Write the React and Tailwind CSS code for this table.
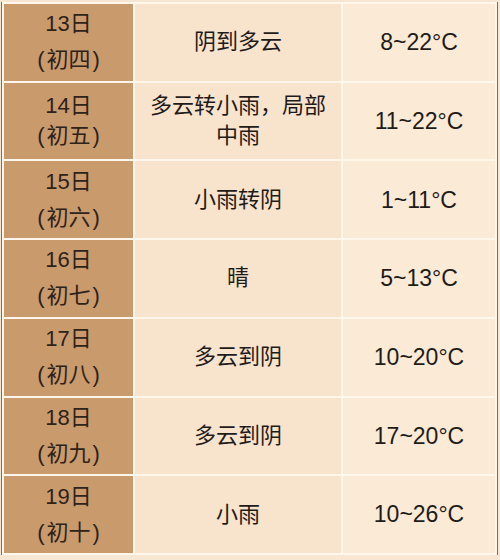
const rows = [
  { day: "13日", lunar: "初四", weather: ["阴到多云"], temp: "8~22°C" },
  { day: "14日", lunar: "初五", weather: ["多云转小雨，局部", "中雨"], temp: "11~22°C", tight: true },
  { day: "15日", lunar: "初六", weather: ["小雨转阴"], temp: "1~11°C" },
  { day: "16日", lunar: "初七", weather: ["晴"], temp: "5~13°C" },
  { day: "17日", lunar: "初八", weather: ["多云到阴"], temp: "10~20°C" },
  { day: "18日", lunar: "初九", weather: ["多云到阴"], temp: "17~20°C" },
  { day: "19日", lunar: "初十", weather: ["小雨"], temp: "10~26°C" },
];

export default function App() {
  return (
    <div
      className="w-[500px] h-[560px] overflow-hidden bg-[#f7e6d2] pl-[1px] flex flex-col"
      style={{ fontFamily: '"Liberation Sans", "Noto Sans CJK SC", sans-serif' }}
    >
      <div className="mt-[2px] w-[497px] border-x border-[#a85a4c]">
        {/* weather table */}
        <div className="grid grid-cols-[129px_206px_152px] grid-rows-[repeat(7,minmax(0,1fr))] gap-[2px] p-[2px] h-[553px] bg-[#fff7ec]">
          {rows.map((r) => (
            <Row key={r.day} {...r} />
          ))}
        </div>
      </div>
    </div>
  );
}

function Row({ day, lunar, weather, temp, tight }) {
  const lead = tight ? "leading-[30px]" : "leading-[36px]";
  return (
    <>
      <div className={`bg-[#c99a6c] text-[#2e2219] text-[22px] flex flex-col items-center justify-center ${lead}`}>
        <span>{day}</span>
        <span className="flex items-center gap-[2px]">
          <span className="font-light">(</span>
          <span>{lunar}</span>
          <span className="font-light">)</span>
        </span>
      </div>
      <div className={`bg-[#f8e3cd] text-[#1f1b18] text-[22px] flex flex-col items-center justify-center text-center ${lead}`}>
        {weather.map((w) => (
          <span key={w}>{w}</span>
        ))}
      </div>
      <div className="bg-[#faead6] text-[#1f1b18] text-[23px] flex items-center justify-center">
        {temp}
      </div>
    </>
  );
}
